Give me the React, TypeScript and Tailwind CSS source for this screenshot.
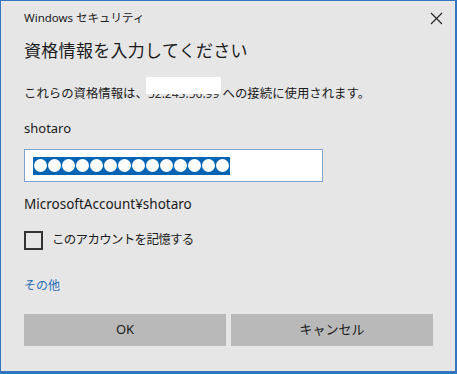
import React from 'react';

const jp = { fontFamily: '"Noto Sans", "Noto Sans CJK JP", sans-serif' };

export default function App() {
    const dots = Array.from({ length: 14 });

    return (
        <div
            className="w-[457px] h-[374px] bg-[#e6e6e6] border-t border-l border-r-2 border-b-[3px] border-[#3574c0] pl-[23px] pr-[21px] flex flex-col text-[#1b1b1b] overflow-hidden"
            style={jp}
        >
            {/* Title bar */}
            <div className="flex items-center justify-between h-[16px] mt-[9px] -mr-[10px]">
                <span className="text-[11.5px] leading-none">Windows セキュリティ</span>
                <svg width="13" height="13" viewBox="0 0 13 13" className="mr-[1px]">
                    <path d="M1 1 L12 12 M12 1 L1 12" stroke="#222" strokeWidth="1.1" fill="none" />
                </svg>
            </div>

            {/* Heading */}
            <h1 className="text-[17px] leading-none mt-[16px] tracking-[0.3px]">資格情報を入力してください</h1>

            {/* Description */}
            <p className="text-[12.4px] leading-none mt-[29px] whitespace-nowrap">
                これらの資格情報は、
                <span className="relative inline-block text-[12px] text-[#333]">
                    52.243.56.99
                    <span className="absolute -left-[2px] -right-[2px] -top-[11px] h-[17px] bg-white"></span>
                </span>
                {' '}への接続に使用されます。
            </p>

            {/* Username */}
            <div className="text-[13px] leading-none mt-[22px]">shotaro</div>

            {/* Password field */}
            <div className="mt-[14px] w-[299px] h-[33px] bg-white border border-[#7fa3d2] flex items-center px-[8px]">
                <div className="h-[18px] bg-[#0064b4] flex items-center px-[1px] gap-[1px]">
                    {dots.map((_, i) => (
                        <span key={i} className="w-[13px] h-[13px] rounded-full bg-white" />
                    ))}
                </div>
            </div>

            {/* Account */}
            <div className="text-[13.5px] leading-none mt-[16px]">MicrosoftAccount¥shotaro</div>

            {/* Remember */}
            <label className="flex items-center mt-[19px] gap-[9px]">
                <span className="w-[19px] h-[19px] border-2 border-[#333] bg-transparent"></span>
                <span className="text-[12.5px] leading-none tracking-[-0.7px]">このアカウントを記憶する</span>
            </label>

            {/* More */}
            <div className="text-[12px] leading-none mt-[30px] text-[#2b6fb8]">その他</div>

            {/* Buttons */}
            <div className="flex gap-[5px] mt-[22px]">
                <button className="w-[202px] h-[32px] bg-[#b9b9b9] text-[13px] text-[#1b1b1b]">OK</button>
                <button className="w-[202px] h-[32px] bg-[#b9b9b9] text-[13px] text-[#1b1b1b]">キャンセル</button>
            </div>
        </div>
    );
}
